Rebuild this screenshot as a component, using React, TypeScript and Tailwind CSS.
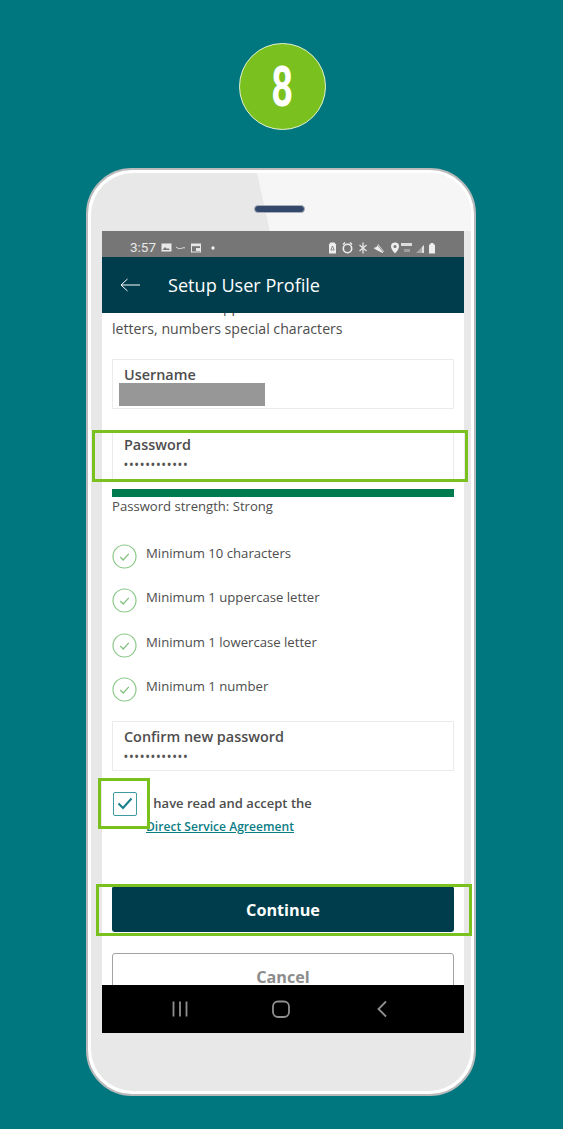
import React from 'react';

const Check = () => (
  <svg width="25" height="25" viewBox="0 0 25 25" fill="none" className="shrink-0">
    <circle cx="12.5" cy="12.5" r="11.5" stroke="#8cc98a" strokeWidth="1.2" />
    <path d="M8.3 13l2.9 3 5.6-6.2" stroke="#7fbf7c" strokeWidth="1.2" />
  </svg>
);

const Field = ({ label, top = 'pt-[5px]', children }: { label: string; top?: string; children: React.ReactNode }) => (
  <div className={`h-[50px] border border-[#e9ebec] pl-[11px] ${top}`}>
    <div className="text-[14.4px] leading-[18px] font-semibold text-[#4d4d4d]">{label}</div>
    {children}
  </div>
);

const Dots = () => (
  <div className="mt-[1px] text-[10px] leading-[18px] font-bold tracking-[1.65px] text-[#555]">••••••••••••</div>
);

const StatusLeft = () => (
  <svg width="56" height="12" viewBox="0 0 56 12" fill="none" className="ml-[5px]">
    <rect x="0.5" y="1.5" width="10" height="8" fill="#fff" fillOpacity="0.85" />
    <path d="M1.5 8l2.5-3 2 2 1-1 2 2z" fill="#777" />
    <path d="M15 5c2 2 5 2 7 0.8h2" stroke="#ddd" strokeWidth="1" />
    <rect x="30.5" y="2" width="9" height="8" stroke="#e6e6e6" strokeWidth="1" />
    <rect x="30.5" y="2" width="9" height="2.2" fill="#e6e6e6" />
    <rect x="35" y="6" width="4" height="3" fill="#e6e6e6" />
    <circle cx="52" cy="6" r="1.7" fill="#eee" />
  </svg>
);

const StatusRight = () => (
  <svg width="110" height="14" viewBox="0 0 110 14" fill="none">
    <path d="M2 3.5l1.5-2h4l1.5 2v9H2z" fill="#eee" />
    <path d="M5.5 5L3.8 9h3.4z" stroke="#777" strokeWidth="0.8" />
    <circle cx="20.5" cy="7.5" r="4.2" stroke="#eee" strokeWidth="1.6" />
    <path d="M16 3.5l2-2M25 3.5l-2-2" stroke="#eee" strokeWidth="1.4" />
    <path d="M36 1.5v11M32.500 4l7 6M32.500 10l7-6" stroke="#e6e6e6" strokeWidth="1.3" />
    <path d="M51 3l6 7.500-1.500 1.500-6-3-3-2 3-1z" fill="#eee" />
    <path d="M49 2l8 10" stroke="#777" strokeWidth="0.8" />
    <path d="M68 1.500a4 4 0 0 1 4 4c0 3-4 7-4 7s-4-4-4-7a4 4 0 0 1 4-4z" fill="#eee" />
    <circle cx="68" cy="5.500" r="1.500" fill="#777" />
    <rect x="74" y="2" width="11" height="3" fill="#dcdcdc" />
    <rect x="77" y="8" width="6" height="3" fill="#9f9f9f" />
    <path d="M89 12l8-8v8z" fill="#a8a8a8" />
    <path d="M95 12V6l2-2v8z" fill="#e0e0e0" />
    <path d="M102 3.500h1.500V2h3v1.500h1.500V12.500h-6z" fill="#eee" />
  </svg>
);

export default function App() {
  return (
    <div className="min-h-[1129px] bg-[#00777f] flex flex-col items-center pt-[43px] font-['Open_Sans',sans-serif]">
      <div className="w-[87px] h-[87px] rounded-full bg-[#7ac11f] border border-[#e4f2d2] flex items-center justify-center ml-[2px]">
        <span className="text-[56px] leading-none font-bold text-white font-['Roboto',sans-serif] scale-x-[0.68]">8</span>
      </div>

      {/* Phone */}
      <div className="relative mt-[38px] w-[390px] h-[928px] -ml-[1px] rounded-[46px] border-2 border-[#b9babb] bg-white p-[3px]">
        <div className="relative h-full rounded-[42px] bg-[#e8e8e8] overflow-hidden">
          <div className="absolute top-0 left-[166px] right-0 h-[58px] bg-[#f6f6f6] [clip-path:polygon(0_0,100%_0,100%_100%,6%_100%,3%_50%)]" />
          <div className="relative h-[58px] flex justify-center pr-[3px] pt-[32px]">
            <div className="w-[51px] h-[8px] rounded-full bg-[#33486a] border border-[#a9b0bb]" />
          </div>

          {/* Screen */}
          <div className="relative ml-[11px] w-[362px] h-[802px] flex flex-col bg-white">
            <div className="h-[26px] shrink-0 bg-[#767676] flex items-center pt-[7px] pl-[28px] pr-[27px]">
              <span className="text-[13.5px] text-[#e8e8e8] font-['Roboto',sans-serif]">3:57</span>
              <StatusLeft />
              <div className="ml-auto"><StatusRight /></div>
            </div>
            <div className="h-[56px] shrink-0 bg-[#003d4c] flex items-center pl-[18px]">
              <svg width="20" height="14" viewBox="0 0 20 14" fill="none">
                <path d="M20 7H1M7.500 1L1 7l6.500 6" stroke="#fff" strokeWidth="1" />
              </svg>
              <span className="ml-[28px] pt-[1px] text-[18.1px] text-white">Setup User Profile</span>
            </div>

            <div className="flex-1 overflow-hidden px-[10px]">
              <div className="-mt-[18px] text-[14.15px] text-[#4d4d4d]">
                <div className="leading-[24px]">Should contain uppercase and lowercase</div>
                <div className="leading-[20px]">letters, numbers special characters</div>
              </div>

              <div className="mt-[20px]">
                <Field label="Username" top="pt-[6px]">
                  <div className="-ml-[5px] -mt-px w-[146px] h-[23px] bg-[#979797]" />
                </Field>
              </div>
              <div className="mt-[21px]">
                <Field label="Password"><Dots /></Field>
              </div>
              <div className="mt-[9px] h-[8px] bg-[#007b4f]" />
              <div className="text-[13.1px] leading-[18px] text-[#4d4d4d]">Password strength: Strong</div>

              <div className="mt-[29px] flex flex-col gap-[19.33px]">
                {['Minimum 10 characters', 'Minimum 1 uppercase letter', 'Minimum 1 lowercase letter', 'Minimum 1 number'].map((t) => (
                  <div key={t} className="flex items-start gap-[9px]">
                    <Check />
                    <span className="text-[13.15px] leading-[18px] text-[#4d4d4d]">{t}</span>
                  </div>
                ))}
              </div>

              <div className="mt-[19px]">
                <Field label="Confirm new password" top="pt-[6px]"><Dots /></Field>
              </div>

              <div className="mt-[21px] flex items-start ml-px">
                <div className="w-[24px] h-[24px] shrink-0 border border-[#3d9aa0] rounded-[2px] flex items-center justify-center">
                  <svg width="16" height="13" viewBox="0 0 16 13" fill="none">
                    <path d="M1.500 6.500l4.500 4.500 8.500-9.500" stroke="#17808a" strokeWidth="2" />
                  </svg>
                </div>
                <div className="ml-[9px]">
                  <div className="text-[13px] leading-[22px] font-semibold text-[#4d4d4d]">I have read and accept the</div>
                  <div className="mt-[2px] text-[12.1px] leading-[22px] font-semibold text-[#0b7d86] underline">Direct Service Agreement</div>
                </div>
              </div>

              <div className="mt-[48px] h-[46px] rounded-[3px] bg-[#003d4c] flex items-center justify-center pt-[3px] text-[16.2px] font-bold text-white">Continue</div>
              <div className="mt-[21px] h-[46px] rounded-[3px] border border-[#a3a3a3] flex items-center justify-center pt-[3px] text-[16.2px] font-bold text-[#8c8c8c]">Cancel</div>
            </div>

            <div className="h-[48px] shrink-0 bg-black flex items-center justify-center pl-[8px]">
              <svg width="230" height="20" viewBox="0 0 230 20" fill="none" stroke="#8f8f8f">
                <path d="M1.500 2.500v15M8 2.500v15M14.500 2.500v15" strokeWidth="1.800" />
                <rect x="101" y="2.500" width="16" height="15.500" rx="5" strokeWidth="1.800" />
                <path d="M214 2.500l-7.500 7.500 7.500 7.500" strokeWidth="1.800" />
              </svg>
            </div>
          </div>
        </div>

        {/* Highlight boxes */}
        <div className="absolute left-[4px] top-[260px] w-[376px] h-[52px] border-[3px] border-[#7ac11f]" />
        <div className="absolute left-[10px] top-[608px] w-[52px] h-[51px] border-[3px] border-[#7ac11f]" />
        <div className="absolute left-[8px] top-[714px] w-[376px] h-[52px] border-[3px] border-[#7ac11f]" />
      </div>
    </div>
  );
}
